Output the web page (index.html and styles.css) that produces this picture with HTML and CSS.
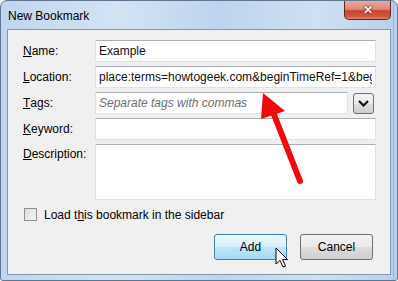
FILE: index.html
```html
<!DOCTYPE html>
<html lang="en">
<head>
    <meta charset="UTF-8">
    <title>New Bookmark</title>
    <link rel="stylesheet" href="styles.css">
</head>
<body>
    <div class="window">
        <div class="titlebar">
            <span class="title">New Bookmark</span>
            <div class="close">&#x2715;</div>
        </div>
        <div class="content">
            <div class="form">
                <label class="label"><u>N</u>ame:</label>
                <input class="field" type="text" value="Example">

                <label class="label"><u>L</u>ocation:</label>
                <input class="field" type="text" value="place:terms=howtogeek.com&amp;beginTimeRef=1&amp;beginTime=0&amp;endTimeRef=2">

                <label class="label"><u>T</u>ags:</label>
                <div class="tags-row">
                    <input class="field" type="text" placeholder="Separate tags with commas">
                    <div class="drop">
                        <svg width="11" height="7" viewBox="0 0 11 7"><path d="M1 1 L5.5 5.5 L10 1" fill="none" stroke="#111" stroke-width="2.2"/></svg>
                    </div>
                </div>

                <label class="label"><u>K</u>eyword:</label>
                <input class="field" type="text">

                <label class="label label-top"><u>D</u>escription:</label>
                <textarea class="field desc"></textarea>
            </div>

            <div class="check-row">
                <span class="checkbox"></span>
                <span>Load t<u>h</u>is bookmark in the sidebar</span>
            </div>

            <div class="buttons">
                <div class="btn btn-hover">Add</div>
                <div class="btn">Cancel</div>
            </div>
        </div>

        <!-- flecha roja y cursor encima del dialogo -->
        <svg class="overlay" width="398" height="281" viewBox="0 0 398 281">
            <line x1="300" y1="181" x2="273" y2="112" stroke="#f20a0a" stroke-width="6" stroke-linecap="round"/>
            <polygon points="263,93 261,119 285,111" fill="#f20a0a"/>
            <path d="M276 248 L276 264 L280 260.5 L283 267 L285.5 266 L282.6 259.6 L287.5 259.6 Z" fill="#fff" stroke="#000" stroke-width="1" stroke-linejoin="round"/>
        </svg>
    </div>
</body>
</html>
```

FILE: styles.css
```css
body {
    margin: 0;
    background: #fff;
    font-family: "Liberation Sans", Arial, sans-serif;
    font-size: 12px;
    color: #000;
}

.window {
    position: relative;
    width: 398px;
    height: 281px;
    box-sizing: border-box;
    border: 1px solid #5f7591;
    border-radius: 7px 7px 3px 3px;
    background:
        linear-gradient(to right, transparent 392px, #9ab6d8 392px, #9ab6d8 393px, transparent 393px),
        linear-gradient(to right, #c0d6ee 0%, #d3e3f4 30%, #bcd4ee 55%, #cfe0f2 80%, #b7cfea 100%);
    padding: 0 6px 5px 6px;
    display: flex;
    flex-direction: column;
}

.titlebar {
    height: 28px;
    display: flex;
    justify-content: space-between;
    align-items: flex-start;
}

.title {
    margin-top: 8px;
    margin-left: 1px;
}

.close {
    width: 45px;
    height: 18px;
    border: 1px solid #6a2216;
    border-top: none;
    border-radius: 0 0 5px 5px;
    background: linear-gradient(to bottom, #e9aa9c 0%, #dd8a79 45%, #c8452d 55%, #d0583f 85%, #e08670 100%);
    color: #fff;
    font-size: 12px;
    font-weight: bold;
    text-align: center;
    line-height: 18px;
    text-shadow: 0 0 2px #4a1008, 0 0 1px #4a1008;
}

.content {
    flex: 1;
    background: #f0f0f0;
    border: 1px solid #8397b0;
    padding: 10px 14px 14px 15px;
    display: flex;
    flex-direction: column;
}

.form {
    display: grid;
    grid-template-columns: 72px 1fr;
    row-gap: 4px;
}

.label {
    display: flex;
    align-items: center;
    height: 22px;
}

.label-top {
    align-items: flex-start;
    padding-top: 3px;
    height: auto;
}

.field {
    box-sizing: border-box;
    height: 22px;
    width: 100%;
    margin: 0;
    border: 1px solid #dde2e8;
    border-top-color: #abadb3;
    background: #fff;
    padding: 0 3px;
    font-family: "Liberation Sans", Arial, sans-serif;
    font-size: 12px;
    color: #111;
    outline: none;
}

.field::placeholder {
    color: #6d6d6d;
    font-style: italic;
}

.desc {
    height: 56px;
    resize: none;
}

.tags-row {
    display: flex;
    align-items: center;
}

.tags-row .field {
    flex: 1;
    width: auto;
}

.drop {
    width: 21px;
    height: 21px;
    box-sizing: border-box;
    margin-left: 5px;
    margin-right: 2px;
    border: 1px solid #707070;
    border-radius: 3px;
    background: linear-gradient(to bottom, #f2f2f2 0%, #ebebeb 50%, #dddddd 51%, #cfcfcf 100%);
    display: flex;
    align-items: center;
    justify-content: center;
}

.check-row {
    display: flex;
    align-items: center;
    margin-top: 8px;
    margin-left: 1px;
    height: 13px;
}

.checkbox {
    width: 11px;
    height: 11px;
    border: 1px solid #8e8f8f;
    background: linear-gradient(to bottom right, #dcdcdc, #f6f6f6);
    margin-right: 7px;
}

.buttons {
    display: flex;
    justify-content: flex-end;
    gap: 13px;
    margin-top: 13px;
    margin-right: 3px;
}

.btn {
    width: 73px;
    height: 26px;
    box-sizing: border-box;
    border: 1px solid #707070;
    border-radius: 3px;
    background: linear-gradient(to bottom, #f2f2f2 0%, #ebebeb 50%, #dddddd 51%, #cfcfcf 100%);
    display: flex;
    align-items: center;
    justify-content: center;
}

.btn-hover {
    border-color: #3c7fb1;
    background: linear-gradient(to bottom, #eaf6fd 0%, #d9f0fc 50%, #bee6fd 51%, #a7d9f5 100%);
}

.overlay {
    position: absolute;
    left: -1px;
    top: -1px;
    pointer-events: none;
}
```
